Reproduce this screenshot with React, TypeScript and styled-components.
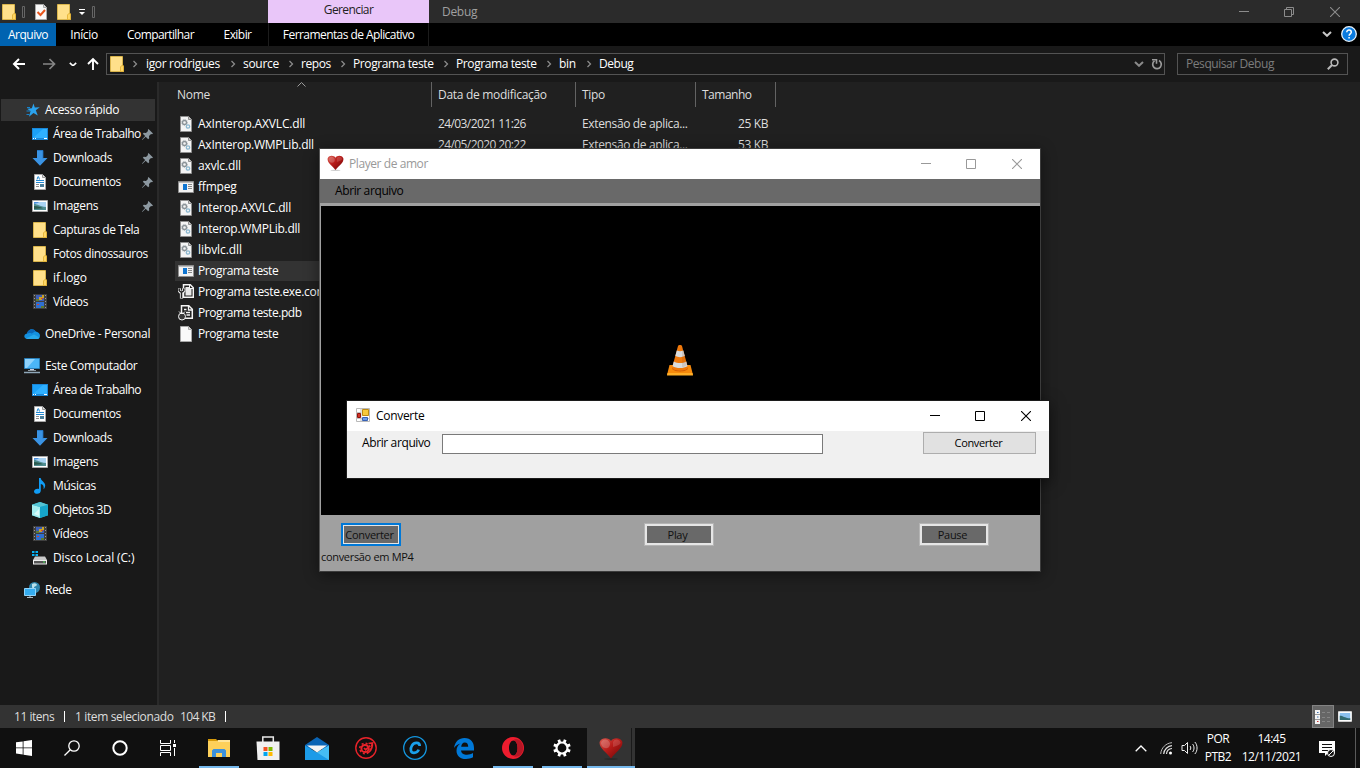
import React from "react";
import styled, { createGlobalStyle, css } from "styled-components";

const Global = createGlobalStyle`
  * { box-sizing: border-box; }
  body { margin: 0; background: #202020; overflow: hidden; }
  #root { width: 1360px; height: 768px; }
`;

const Screen = styled.div`
  position: relative;
  width: 1360px;
  height: 768px;
  display: flex;
  flex-direction: column;
  overflow: hidden;
  background: #202020;
  color: #fff;
  font: 12px/16px "Open Sans", "Noto Sans", sans-serif;
  letter-spacing: -0.3px;
  white-space: nowrap;
  cursor: default;
`;

const Text = styled.span<{ $ls?: number; $size?: number; $color?: string }>`
  display: block;
  letter-spacing: ${(p) => p.$ls ?? -0.3}px;
  ${(p) => p.$size && css`font-size: ${p.$size}px;`}
  ${(p) => p.$color && css`color: ${p.$color};`}
`;
const Gap = styled.span<{ $w: number }>`
  flex: none;
  width: ${(p) => p.$w}px;
`;

/* ---------- Explorer chrome ---------- */
const TitleBar = styled.header`
  display: flex;
  height: 23px;
  background: #2b2b2b;
`;
const QuickAccess = styled.div`
  width: 268px;
  display: flex;
  align-items: center;
  padding-left: 1px;
`;
const ContextTab = styled.div`
  width: 161px;
  height: 23px;
  padding-top: 2px;
  text-align: center;
  background: #e9c6f9;
  color: #222;
`;
const WindowName = styled.div`
  flex: 1;
  padding: 4px 0 0 13px;
  color: #a0a0a0;
`;
const Controls = styled.div<{ $right: number; $color: string }>`
  display: flex;
  align-items: center;
  gap: 35px;
  padding-right: ${(p) => p.$right}px;
  color: ${(p) => p.$color};
  & > :last-child { margin-left: 1px; }
`;
const Ribbon = styled.nav`
  display: flex;
  height: 23px;
  background: #000;
  align-items: center;
`;
const RibbonTab = styled.div<{ $w: number; $active?: boolean; $edge?: boolean }>`
  width: ${(p) => p.$w}px;
  height: 23px;
  padding-top: 4px;
  text-align: center;
  background: ${(p) => (p.$active ? "#0063b1" : "transparent")};
  ${(p) => p.$edge && css`border-left: 1px solid #1c1c1c; border-right: 1px solid #1c1c1c;`}
`;
const RibbonEnd = styled.div`
  margin-left: auto;
  display: flex;
  align-items: center;
  gap: 9px;
  padding: 0 3px 1px 0;
`;
const NavBar = styled.div`
  display: flex;
  height: 36px;
  padding: 7px 12px 7px 0;
  background: #191919;
`;
const NavButtons = styled.div`
  width: 106px;
  display: flex;
  align-items: center;
`;
const AddressBox = styled.div`
  width: 1059px;
  height: 22px;
  border: 1px solid #535353;
  display: flex;
  align-items: center;
`;
const Crumb = styled.div<{ $w: number }>`
  width: ${(p) => p.$w}px;
  height: 20px;
  display: flex;
  align-items: center;
  justify-content: space-between;
  padding: 0 7px 0 0;
`;
const AddressTools = styled.div`
  margin-left: auto;
  display: flex;
  align-items: center;
  gap: 7px;
  padding-right: 1px;
`;
const SearchBox = styled.div`
  margin-left: 12px;
  width: 171px;
  height: 22px;
  border: 1px solid #535353;
  display: flex;
  align-items: center;
  justify-content: space-between;
  padding: 0 8px 0 8px;
  color: #7c7c7c;
`;
const Body = styled.div`
  flex: 1;
  display: flex;
  min-height: 0;
`;
const Sidebar = styled.aside`
  width: 159px;
  padding-top: 16px;
  background: #191919;
  border-right: 2px solid #2a2a2a;
`;
const SideRow = styled.div<{ $level: number; $gap?: boolean; $active?: boolean }>`
  display: flex;
  align-items: center;
  width: 154px;
  height: ${(p) => (p.$active ? 22 : 24)}px;
  margin: ${(p) => (p.$active ? "1px 0 1px 1px" : p.$gap ? "8px 0 0 1px" : "0 0 0 1px")};
  padding-left: ${(p) => (p.$level ? 31 : 23)}px;
  background: ${(p) => (p.$active ? "#333" : "transparent")};
`;
const SideIcon = styled.span`
  display: flex;
  width: 16px;
  margin-right: 5px;
`;
const PinSlot = styled.span`
  display: flex;
  margin: 0 2px 0 auto;
`;
const FileArea = styled.main`
  flex: 1;
  display: flex;
  flex-direction: column;
`;
const ColumnHeads = styled.div`
  display: flex;
  height: 31px;
  color: #dedede;
`;
const ColumnHead = styled.div<{ $w: number; $pad: number }>`
  position: relative;
  width: ${(p) => p.$w}px;
  height: 25px;
  padding: 5px 0 0 ${(p) => p.$pad}px;
  border-right: 1px solid #636363;
`;
const SortMark = styled.span`
  position: absolute;
  left: 138px;
  top: 0;
  display: flex;
`;
const FileRow = styled.div<{ $active?: boolean }>`
  display: flex;
  align-items: center;
  height: ${(p) => (p.$active ? 20 : 21)}px;
  margin: ${(p) => (p.$active ? "1px 0 0 16px" : "0 0 0 16px")};
  width: 600px;
  padding-left: 3px;
  background: ${(p) => (p.$active ? "#333" : "transparent")};
`;
const FileName = styled.div`
  width: 244px;
  padding-left: 4px;
`;
const Cell = styled.div<{ $w: number; $right?: boolean }>`
  width: ${(p) => p.$w}px;
  color: #dedede;
  display: flex;
  justify-content: ${(p) => (p.$right ? "flex-end" : "flex-start")};
`;
const StatusBar = styled.footer`
  display: flex;
  align-items: center;
  height: 23px;
  padding: 0 8px 0 14px;
  background: #333;
  color: #dedede;
`;
const StatusItem = styled.div<{ $w: number }>`
  width: ${(p) => p.$w}px;
`;
const StatusLine = styled.i`
  width: 1px;
  height: 11px;
  margin-right: 10px;
  background: #fff;
`;
const ViewModes = styled.div`
  margin-left: auto;
  display: flex;
  align-items: center;
  gap: 4px;
`;
const ViewMode = styled.div`
  width: 22px;
  height: 23px;
  display: flex;
  align-items: center;
  justify-content: center;
  background: #666;
  border: 1px solid #838383;
`;

/* ---------- Taskbar ---------- */
const Taskbar = styled.footer`
  display: flex;
  height: 40px;
  background: #101010;
`;
const TaskGroup = styled.div<{ $gap?: number }>`
  display: flex;
  margin-left: ${(p) => p.$gap ?? 0}px;
`;
const TaskButton = styled.div<{ $w: number; $open?: boolean; $current?: boolean }>`
  width: ${(p) => p.$w}px;
  height: 40px;
  display: flex;
  flex-direction: column;
  align-items: center;
  justify-content: space-between;
  ${(p) =>
    p.$current &&
    css`
      margin-left: 1px;
      background: linear-gradient(90deg, #333 44px, #1a1a1a 44px, #1a1a1a 45px, #333 45px);
    `}
  &::after {
    content: "";
    width: ${(p) => (p.$current ? 48 : 40)}px;
    height: 2px;
    background: ${(p) => (p.$open ? "#76b9ed" : "transparent")};
  }
`;
const TaskIcon = styled.span`
  flex: 1;
  display: flex;
  align-items: center;
  padding-top: 2px;
`;
const Tray = styled.div`
  margin-left: auto;
  display: flex;
  align-items: center;
  height: 40px;
`;
const TrayIcon = styled.span<{ $w: number }>`
  width: ${(p) => p.$w}px;
  display: flex;
  justify-content: center;
`;
const TrayText = styled.div<{ $w: number }>`
  width: ${(p) => p.$w}px;
  height: 34px;
  display: flex;
  flex-direction: column;
  justify-content: space-between;
  align-items: center;
`;
const ShowDesktop = styled.i`
  width: 5px;
  height: 40px;
  border-left: 1px solid #5a5a5a;
`;

/* ---------- Floating windows ---------- */
const Player = styled.section`
  position: absolute;
  left: 319px;
  top: 148px;
  width: 722px;
  height: 424px;
  border: 1px solid #3c3c3c;
  border-left-color: #555;
  background: #a0a0a0;
  display: flex;
  flex-direction: column;
  color: #111;
  box-shadow: 0 3px 14px rgba(0, 0, 0, 0.45);
`;
const Caption = styled.div<{ $color: string }>`
  display: flex;
  align-items: center;
  height: 30px;
  flex: none;
  background: #fff;
  color: ${(p) => p.$color};
`;
const CaptionIcon = styled.span<{ $left: number; $gap: number }>`
  display: flex;
  margin: 0 ${(p) => p.$gap}px 2px ${(p) => p.$left}px;
`;
const CaptionText = styled.div`
  flex: 1;
`;
const MenuStrip = styled.div`
  height: 24px;
  padding: 4px 0 0 15px;
  background: #696969;
  color: #000;
`;
const Video = styled.div`
  height: 309px;
  margin: 3px 0 0 1px;
  padding: 0 2px 2px 0;
  background: #000;
  display: flex;
  justify-content: center;
  align-items: center;
`;
const PlayerControls = styled.div`
  display: flex;
  height: 33px;
  padding: 8px 0 0 21px;
`;
const PlayerButton = styled.button<{ $w: number; $left?: number; $focus?: boolean }>`
  width: ${(p) => p.$w}px;
  height: 23px;
  margin: 0 0 0 ${(p) => p.$left ?? 0}px;
  padding: 0 3px 0 0;
  display: flex;
  align-items: center;
  justify-content: center;
  font: inherit;
  color: #111;
  background: #696969;
  border: ${(p) => (p.$focus ? "2px solid #0078d7" : "1px solid #b4b4b4")};
  box-shadow: inset 0 0 0 ${(p) => (p.$focus ? 1 : 2)}px #e6e6e6;
`;
const StatusNote = styled.div`
  padding: 1px 0 0 1px;
`;
const Converter = styled.section`
  position: absolute;
  left: 346px;
  top: 400px;
  width: 704px;
  height: 79px;
  border: 1px solid #1c1c1c;
  background: #f0f0f0;
  color: #000;
  box-shadow: 0 4px 14px rgba(0, 0, 0, 0.5);
`;
const Form = styled.div`
  display: flex;
  padding: 1px 13px 0 15px;
`;
const FormLabel = styled.label`
  width: 80px;
  padding-top: 3px;
`;
const FormInput = styled.input`
  width: 381px;
  height: 20px;
  margin-top: 2px;
  padding: 0;
  border: 1px solid #7a7a7a;
  background: #fff;
`;
const FormButton = styled.button`
  margin-left: auto;
  width: 113px;
  height: 22px;
  padding: 0 2px 1px 0;
  border: 1px solid #adadad;
  background: #e1e1e1;
  font: inherit;
  color: #000;
  display: flex;
  align-items: center;
  justify-content: center;
`;

/* ---------- Icons ---------- */
const Drawing = styled.svg`
  display: block;
  flex: none;
`;
const Svg = ({ w = 16, h = w, v, children }: { w?: number; h?: number; v?: string; children: React.ReactNode }) => (
  <Drawing width={w} height={h} viewBox={v ?? `0 0 ${w} ${h}`} fill="none">
    {children}
  </Drawing>
);

const Folder = () => (
  <Svg>
    <path d="M1.500.5h12v9l1 .8v5.200h-13z" fill="#ffe08a" stroke="#eec34a" strokeWidth=".8" />
    <path d="M11.500 15.500V11l1-1.300h2v5.800z" fill="#ffd765" stroke="#e0ad30" strokeWidth=".8" />
  </Svg>
);
const Checked = () => (
  <Svg>
    <path d="M2.500.5h8l3 3v12h-11z" fill="#fafafa" stroke="#aaa" />
    <path d="M10.500.5v3h3" fill="#ddd" stroke="#aaa" />
    <path d="M4.500 8l3 3L12 6" stroke="#e8561d" strokeWidth="2" />
  </Svg>
);
const Star = () => (
  <Svg>
    <path d="M9.500 1.500l1.300 4 5-.2-4 3 2 5.300-4.300-2.600-4.500 3.700 1.500-5.400-3.300-2.600 4.600-.5z" fill="#2ba3ee" />
    <path d="M3 5.500h3M2.500 9h4M2.500 12.500h3" stroke="#1683cc" />
  </Svg>
);
const Desktop = () => (
  <Svg>
    <path d="M0 2h16v12H0z" fill="#1a87d8" />
    <path d="M1 3h14v9H1z" fill="#1ba1f8" />
    <path d="M1 12L11 3h4v9z" fill="#2fb0ff" />
    <path d="M1 12.500h1M3 12.500h1M12 12.500h3" stroke="#fff" />
  </Svg>
);
const Download = () => (
  <Svg>
    <path d="M5 0h6v8h4.500L8 15.800.5 8H5z" fill="#3a93e4" />
    <path d="M5 .5h6v8" stroke="#1e70bd" strokeWidth=".8" />
  </Svg>
);
const Doc = () => (
  <Svg>
    <path d="M2.500.5h8l3 3v12h-11z" fill="#fff" stroke="#a8a8a8" />
    <path d="M10.500.5v3h3" fill="#ddd" stroke="#999" />
    <path d="M6 2.500L5 5.500M6.500 2.500l1 3M4 6.500h8M4 8.500h8" stroke="#2389d2" />
    <path d="M4 10.500h3M4 12.500h3" stroke="#8d8d8d" />
    <path d="M8 10h4v3H8z" fill="#4b7f9b" />
  </Svg>
);
const Picture = () => (
  <Svg>
    <path d="M.5 2.500h15v11H.5z" fill="#fff" stroke="#a9a9a9" />
    <path d="M2 4h12v8H2z" fill="#a9d3f3" />
    <path d="M2 6c4 0 5 2.500 12 3v3H2z" fill="#4f8d91" />
    <path d="M2 8c4 0 6 1 9 2.200l-9 .8z" fill="#2b5a4e" />
    <path d="M2 4h5c-1 1.500-3 1-5 2z" fill="#4b8edb" />
  </Svg>
);
const Film = () => (
  <Svg>
    <path d="M1 0h14v15H1z" fill="#3f3f3f" />
    <path d="M4 1h8v6H4z" fill="#3e5fb8" />
    <path d="M4 8h8v6H4z" fill="#2f6fd0" />
    <path d="M7 3h3v3H7zM10 1h2v3h-2z" fill="#c9a227" />
    <path d="M4 5h3v2H4zM9 12h3v2H9z" fill="#5d7b33" />
    <path d="M9 4h2v1H9zM5 10h2v1H5z" fill="#d3452b" />
    <path d="M2.500 1v14M13.500 1v14" stroke="#999" strokeDasharray="1 2" />
  </Svg>
);
const Cloud = () => (
  <Svg>
    <path d="M3.500 13C-.5 13-.8 8.200 3 7.500 4 3.300 9 1.500 11.800 5.500 15 6 16 8 16 9.800c0 1.800-1.200 3.200-3 3.200z" fill="#1490df" />
    <path d="M3 7.500C4 3.300 9 1.500 11.800 5.500c-2 .2-3 1.500-4 2C6 6.700 4.500 7 3 7.500z" fill="#0a66b7" />
    <path d="M2 12.600l8-4.100 5.500 3c-.5 1-1.500 1.500-2.500 1.500H3.500z" fill="#28a8ea" />
  </Svg>
);
const Computer = () => (
  <Svg>
    <path d="M.5.5h15v10H.5z" fill="#4bb5f7" stroke="#2a7fb8" />
    <path d="M1 1h10L3 10H1z" fill="#8fd2fb" />
    <path d="M6 11h4v1.500H6z" fill="#ccd" />
    <path d="M4 12.500h8" stroke="#8e9aa3" />
    <path d="M0 14.500h16" stroke="#8fa7b8" strokeWidth="1.500" />
  </Svg>
);
const Music = () => (
  <Svg>
    <path d="M7 0h1.700c.3 3 4.500 4.200 4.500 7.300 0 1.700-.7 3-1.600 3.900C12 8 11 6.500 8.800 6v6.500c0 2-1.500 3.300-3.600 3.300C3.500 15.800 2 15 2 13.500c0-2 2.600-3.300 5-2.500z" fill="#109cf5" />
  </Svg>
);
const Cube = () => (
  <Svg>
    <path d="M8 0l8 2.700v10.500L8 16l-8-2.800V2.700z" fill="#2cc0d8" />
    <path d="M0 2.700L8 5v11l-8-2.800z" fill="#a5eef0" />
    <path d="M0 2.700L8 0l8 2.700L8 5z" fill="#55c4d4" />
    <path d="M8 5l8-2.300v10.500L8 16z" fill="#16a5ca" />
    <path d="M2 12l5-5v7z" fill="#d8fbfa" />
  </Svg>
);
const Disk = () => (
  <Svg>
    <path d="M0 1h2.500v2H0zM3.500 1H6v2H3.500zM0 4h2.500v2H0zM3.500 4H6v2H3.500z" fill="#08b3f5" />
    <path d="M3 6.500h10L15 10H1z" fill="#c9c9c9" />
    <path d="M1 10h14v4.500H1z" fill="#efefef" />
    <path d="M2 11h12v2.500H2z" fill="#555" />
    <path d="M11 12h2" stroke="#45e054" />
  </Svg>
);
const Network = () => (
  <Svg>
    <circle cx="10.500" cy="5.500" r="5.500" fill="#2f86ad" />
    <path d="M8 2c3-2 5 0 5 1s-3 1-3 3-2 0-2-1z" fill="#b9e0ea" />
    <path d="M.5 6.500h11v7H.5z" fill="#35acef" stroke="#91d4fa" />
    <path d="M6 14v1M3 15.500h6" stroke="#aebbc4" />
  </Svg>
);
const Pin = () => (
  <Svg w={11}>
    <path d="M6.500 0L11 4.500l-1 .8-1-.2-2 2 .2 2.200-1 1L3.700 7.800.5 10.800 0 11l.2-.7L3.200 7 .8 4.700l1-1L4 4l2-2-.2-1z" fill="#8c98a0" />
  </Svg>
);
const Dll = () => (
  <Svg>
    <path d="M2.500.5h8l3 3v12h-11z" fill="#f4f4f4" stroke="#8f8f8f" />
    <path d="M10.500.5v3h3" fill="#ccc" stroke="#8f8f8f" />
    <circle cx="6.500" cy="6.500" r="2" stroke="#8a9297" strokeWidth="1.300" />
    <circle cx="6.500" cy="6.500" r="3" stroke="#a6adb2" strokeDasharray="1 1" />
    <circle cx="10" cy="10.500" r="1.700" stroke="#8db8d0" strokeWidth="1.300" />
  </Svg>
);
const Exe = () => (
  <Svg>
    <path d="M.5 2.500h15v11H.5z" fill="#f2f2f2" stroke="#8f8f8f" />
    <path d="M1 3.500h14" stroke="#bbb" />
    <path d="M5 5h4v6H5z" fill="#0f75d1" />
    <path d="M10 5.500h4M10 7.500h4M10 9.500h4" stroke="#888" />
  </Svg>
);
const Config = () => (
  <Svg>
    <path d="M5.500.8h6.800l3 3v9.500H5.500z" fill="#222" stroke="#f4f4f4" strokeWidth="1.500" />
    <path d="M7.500 3H11l2.500 2.500v6h-6z" fill="#e8e8e8" />
    <path d="M11.500 1v3.500H15" stroke="#f4f4f4" />
    <path d="M1.200 4.200v2.600L3.500 9v5.500M5.800 4.200v2.600L3.500 9" stroke="#f4f4f4" strokeWidth="3.200" />
    <path d="M1.200 4.500v2.200L3.500 8.500v5.500M5.800 4.500v2.200L3.500 8.500" stroke="#222" strokeWidth="1.500" />
  </Svg>
);
const Pdb = () => (
  <Svg>
    <path d="M3.500.8h7.300l3.500 3.500v9H3.500z" fill="#222" stroke="#f4f4f4" strokeWidth="1.500" />
    <path d="M10.500 1v4H14M6 4.500h2.500M8 7.500h4M8.500 10h3.500" stroke="#f4f4f4" strokeWidth="1.300" />
    <circle cx="4" cy="11.500" r="3.500" fill="#3a3a3a" stroke="#f4f4f4" />
    <path d="M1 6.500l2 2h2l2-2" stroke="#f4f4f4" />
  </Svg>
);
const Blank = () => (
  <Svg>
    <path d="M2.500.5h8l3 3v12h-11z" fill="#fafafa" stroke="#a8a8a8" />
    <path d="M10.500.5v3h3" fill="#ddd" stroke="#a8a8a8" />
  </Svg>
);
const Heart = ({ w, h }: { w: number; h: number }) => (
  <Svg w={w} h={h} v="0 0 24 23">
    <defs>
      <linearGradient id="heart" x1="0" y1="0" x2="1" y2="1">
        <stop offset="0" stopColor="#d8584e" />
        <stop offset=".45" stopColor="#b81c19" />
        <stop offset="1" stopColor="#6c0405" />
      </linearGradient>
    </defs>
    <ellipse cx="12" cy="22" rx="7" ry=".7" fill="#000" opacity=".25" />
    <path d="M12 4C10 .5 3 0 .8 4.500-.8 10.500 7 15 12 21.500 17 15 24.800 10.500 23.200 4.500 21 0 14 .5 12 4z" fill="url(#heart)" />
    <path d="M2 6c.5-4 6-5 8.500-1 1 2 .5 4-1 5.500C7 12 2.500 11 2 6z" fill="#fff" opacity=".2" />
    <path d="M14 5c1.500-3.500 6.500-3.300 7.500.5 0 2-3 3-7.500 4.500z" fill="#fff" opacity=".14" />
  </Svg>
);
const Cone = () => (
  <Svg w={28} h={32}>
    <path d="M3.500 21h21L27 31H1z" fill="#f68a0c" />
    <path d="M1.500 29h25l.5 2.500H1z" fill="#ffae27" />
    <path d="M6 24c0 4.500 16 4.500 16 0z" fill="#cb5a05" />
    <path d="M12 2c.5-1.300 3.500-1.300 4 0l6 22c-2 3.600-14 3.600-16 0z" fill="#ef780b" />
    <path d="M10.800 6.500c2 1 4.500 1 6.500 0l1.500 5.500c-3 1.500-6.500 1.500-9.500 0z" fill="#d9dcde" />
    <path d="M7.800 17.500c3.500 2 9 2 12.500 0l1.200 4.800c-4 2.400-11 2.400-15 0z" fill="#d9dcde" />
    <path d="M16 1l5 20c-1.500 1.500-3 2-5 2z" fill="#843400" opacity=".13" />
  </Svg>
);
const FormIcon = () => (
  <Svg w={14}>
    <path d="M.5.500h13v13H.500z" fill="#fff" stroke="#b9b9b9" />
    <path d="M5 0v14M0 4.500h5M0 10.500h14" stroke="#c4c4c4" />
    <path d="M6.500 1.500h6v6h-6z" fill="#f7c93b" stroke="#bc8a13" />
    <path d="M1.500 5.500h3v4h-3z" fill="#d13427" stroke="#8f120c" />
    <path d="M6.500 9.500h5v3h-5z" fill="#6b9be8" stroke="#3862b5" />
  </Svg>
);
const Minimize = () => <Svg w={10}><path d="M0 4.500h10" stroke="currentColor" /></Svg>;
const Maximize = () => <Svg w={10}><path d="M.5.500h9v9h-9z" stroke="currentColor" /></Svg>;
const Restore = () => <Svg w={10}><path d="M.5 2.500h7v7h-7zM2.500 2.500v-2h7v7h-2" stroke="currentColor" /></Svg>;
const Close = () => <Svg w={10}><path d="M0 0l10 10M10 0L0 10" stroke="currentColor" strokeWidth="1.100" /></Svg>;
const Chevron = ({ color = "#8a8a8a" }: { color?: string }) => (
  <Svg w={6} h={8}><path d="M1.500 1l3 3-3 3" stroke={color} strokeWidth="1.300" /></Svg>
);
const Down = ({ color = "#c8c8c8", w = 10 }: { color?: string; w?: number }) => (
  <Svg w={w} h={w * 0.6} v="0 0 10 6"><path d="M1 1l4 3.800L9 1" stroke={color} strokeWidth="2" /></Svg>
);
const Grip = () => <Svg w={3} h={12}><path d="M.5.500h2v11h-2z" stroke="#666" /></Svg>;

/* ---------- Data ---------- */
type Side = [string, () => React.JSX.Element, number, number, string?];
const side: Side[] = [
  ["Acesso rápido", Star, 0, -0.32, "active"],
  ["Área de Trabalho", Desktop, 1, -0.52, "pin"],
  ["Downloads", Download, 1, -0.4, "pin"],
  ["Documentos", Doc, 1, -0.35, "pin"],
  ["Imagens", Picture, 1, -0.35, "pin"],
  ["Capturas de Tela", Folder, 1, -0.48],
  ["Fotos dinossauros", Folder, 1, -0.42],
  ["if.logo", Folder, 1, -0.02],
  ["Vídeos", Film, 1, -0.35],
  ["OneDrive - Personal", Cloud, 0, -0.35, "gap"],
  ["Este Computador", Computer, 0, -0.34, "gap"],
  ["Área de Trabalho", Desktop, 1, -0.5],
  ["Documentos", Doc, 1, -0.35],
  ["Downloads", Download, 1, -0.4],
  ["Imagens", Picture, 1, -0.35],
  ["Músicas", Music, 1, -0.3],
  ["Objetos 3D", Cube, 1, -0.4],
  ["Vídeos", Film, 1, -0.35],
  ["Disco Local (C:)", Disk, 1, -0.13],
  ["Rede", Network, 0, -0.45, "gap"],
];
type FileItem = { name: string; icon: () => React.JSX.Element; ls?: number; date?: string; kind?: string; size?: string; active?: boolean };
const files: FileItem[] = [
  { name: "AxInterop.AXVLC.dll", icon: Dll, ls: -0.16, date: "24/03/2021 11:26", kind: "Extensão de aplica...", size: "25 KB" },
  { name: "AxInterop.WMPLib.dll", icon: Dll, ls: -0.23, date: "24/05/2020 20:22", kind: "Extensão de aplica...", size: "53 KB" },
  { name: "axvlc.dll", icon: Dll, ls: -0.15 },
  { name: "ffmpeg", icon: Exe, ls: -0.2 },
  { name: "Interop.AXVLC.dll", icon: Dll, ls: -0.2 },
  { name: "Interop.WMPLib.dll", icon: Dll, ls: -0.25 },
  { name: "libvlc.dll", icon: Dll, ls: -0.08 },
  { name: "Programa teste", icon: Exe, ls: -0.42, active: true },
  { name: "Programa teste.exe.config", icon: Config, ls: -0.32 },
  { name: "Programa teste.pdb", icon: Pdb, ls: -0.42 },
  { name: "Programa teste", icon: Blank, ls: -0.42 },
];
const crumbs: [string, number, number][] = [
  ["igor rodrigues", 97, -0.34],
  ["source", 58, -0.3],
  ["repos", 52, -0.4],
  ["Programa teste", 103, -0.4],
  ["Programa teste", 103, -0.4],
  ["bin", 40, -0.3],
];

export default function App() {
  return (
    <Screen>
      <Global />
      <TitleBar>
        <QuickAccess>
          <Folder />
          <Gap $w={5} />
          <Grip />
          <Gap $w={8} />
          <Checked />
          <Gap $w={7} />
          <Folder />
          <Gap $w={6} />
          <Svg w={8} h={8}><path d="M1 1.500h6" stroke="#fff" /><path d="M1 4h6L4 7z" fill="#fff" /></Svg>
          <Gap $w={6} />
          <Grip />
        </QuickAccess>
        <ContextTab><Text $ls={-0.6}>Gerenciar</Text></ContextTab>
        <WindowName><Text>Debug</Text></WindowName>
        <Controls $right={20} $color="#8c8c8c">
          <Minimize />
          <Restore />
          <Close />
        </Controls>
      </TitleBar>
      <Ribbon>
        <RibbonTab $w={56} $active><Text $ls={-0.5}>Arquivo</Text></RibbonTab>
        <RibbonTab $w={56}><Text $ls={-0.35}>Início</Text></RibbonTab>
        <RibbonTab $w={97}><Text $ls={-0.6}>Compartilhar</Text></RibbonTab>
        <RibbonTab $w={57}><Text $ls={-0.55}>Exibir</Text></RibbonTab>
        <Gap $w={2} />
        <RibbonTab $w={161} $edge><Text $ls={-0.57}>Ferramentas de Aplicativo</Text></RibbonTab>
        <RibbonEnd>
          <Down />
          <Svg w={16}>
            <circle cx="8" cy="8" r="7.300" fill="#0a7be0" stroke="#e8f3fc" strokeWidth="1.300" />
            <path d="M5.800 6.200c0-3 4.500-2.800 4.500 0 0 1.600-2.200 1.700-2.200 3.500M8.100 11v1.600" stroke="#fff" strokeWidth="1.500" />
          </Svg>
        </RibbonEnd>
      </Ribbon>
      <NavBar>
        <NavButtons>
          <Gap $w={12} />
          <Svg w={14}><path d="M13 7H2M7 2L2 7l5 5" stroke="#fff" strokeWidth="2" /></Svg>
          <Gap $w={16} />
          <Svg w={14}><path d="M1 7h11.500M7.500 2l5 5-5 5" stroke="#868686" strokeWidth="1.700" /></Svg>
          <Gap $w={13} />
          <Down color="#fff" w={8} />
          <Gap $w={10} />
          <Svg w={12} h={14}><path d="M6 13V2M1 7l5-5 5 5" stroke="#fff" strokeWidth="1.900" /></Svg>
        </NavButtons>
        <AddressBox>
          <Gap $w={2} />
          <Folder />
          <Gap $w={7} />
          <Chevron />
          <Gap $w={8} />
          {crumbs.map(([name, w, ls], i) => (
            <Crumb key={i} $w={w}>
              <Text $ls={ls}>{name}</Text>
              <Chevron />
            </Crumb>
          ))}
          <Text $ls={-0.45}>Debug</Text>
          <AddressTools>
            <Down color="#8a8a8a" />
            <Svg w={12}>
              <path d="M8 2.600a4.300 4.300 0 1 1-4.500.3" stroke="#9a9a9a" strokeWidth="1.700" />
              <path d="M1 1.800h4.500v4" stroke="#9a9a9a" strokeWidth="1.600" />
            </Svg>
          </AddressTools>
        </AddressBox>
        <SearchBox>
          <Text $ls={-0.43}>Pesquisar Debug</Text>
          <Svg w={12}><circle cx="7.500" cy="4.500" r="3.400" stroke="#b8b8b8" strokeWidth="1.600" /><path d="M5 7L.8 11.200" stroke="#b8b8b8" strokeWidth="2" /></Svg>
        </SearchBox>
      </NavBar>
      <Body>
        <Sidebar>
          {side.map(([name, Icon, level, ls, flag], i) => (
            <SideRow key={i} $level={level} $active={flag === "active"} $gap={flag === "gap"}>
              <SideIcon><Icon /></SideIcon>
              <Text $ls={ls}>{name}</Text>
              {flag === "pin" && <PinSlot><Pin /></PinSlot>}
            </SideRow>
          ))}
        </Sidebar>
        <FileArea>
          <ColumnHeads>
            <ColumnHead $w={273} $pad={18}>
              <Text>Nome</Text>
              <SortMark><Svg w={9} h={5}><path d="M.5 4.500l4-4 4 4" stroke="#9a9a9a" /></Svg></SortMark>
            </ColumnHead>
            <ColumnHead $w={144} $pad={6}><Text>Data de modificação</Text></ColumnHead>
            <ColumnHead $w={120} $pad={6}><Text>Tipo</Text></ColumnHead>
            <ColumnHead $w={80} $pad={6}><Text $ls={-0.5}>Tamanho</Text></ColumnHead>
          </ColumnHeads>
          {files.map((f, i) => (
            <FileRow key={i} $active={f.active}>
              <f.icon />
              <FileName><Text $ls={f.ls}>{f.name}</Text></FileName>
              <Cell $w={144}><Text $ls={-0.6}>{f.date}</Text></Cell>
              <Cell $w={120}><Text $ls={-0.36}>{f.kind}</Text></Cell>
              <Cell $w={66} $right><Text $ls={-0.4}>{f.size}</Text></Cell>
            </FileRow>
          ))}
        </FileArea>
      </Body>
      <StatusBar>
        <StatusItem $w={50}><Text $ls={-0.48}>11 itens</Text></StatusItem>
        <StatusLine />
        <StatusItem $w={105}><Text $ls={-0.36}>1 item selecionado</Text></StatusItem>
        <StatusItem $w={45}><Text $ls={-0.6}>104 KB</Text></StatusItem>
        <StatusLine />
        <ViewModes>
          <ViewMode>
            <Svg w={16} h={14}>
              <path d="M0 0h5v14H0z" fill="#f4f4f4" />
              <path d="M0 4.500h5M0 9.500h5" stroke="#999" />
              <path d="M2 2.500h1.500M2 7h1.500" stroke="#3b72b5" />
              <path d="M2 11.500h1.500" stroke="#c33" />
              <path d="M7 2.500h3M12 2.500h3M7 7.500h3M12 7.500h3M7 11.500h3M12 11.500h3" stroke="#858585" />
            </Svg>
          </ViewMode>
          <Svg w={14} h={11} v="0 2 16 12">
            <path d="M.5 2.500h15v11H.5z" fill="#fff" stroke="#eee" />
            <path d="M2 4h12v8H2z" fill="#8ac0ee" />
            <path d="M2 7c4 0 5 2.500 12 3v2H2z" fill="#326b70" />
          </Svg>
        </ViewModes>
      </StatusBar>
      <Taskbar>
        <TaskGroup>
          <TaskButton $w={48}><TaskIcon><Svg w={16}><path d="M0 2.300l6.700-.9v6.100H0zM7.500 1.300L16 0v7.500H7.500zM0 8.300h6.700v6.200L0 13.600zM7.500 8.300H16V16l-8.500-1.200z" fill="#fff" /></Svg></TaskIcon></TaskButton>
          <TaskButton $w={48}><TaskIcon><Svg w={16}><circle cx="10" cy="6" r="5.200" stroke="#fff" strokeWidth="1.300" /><path d="M6.300 9.700L.5 15.500" stroke="#fff" strokeWidth="1.300" /></Svg></TaskIcon></TaskButton>
          <TaskButton $w={48}><TaskIcon><Svg w={16}><circle cx="8" cy="8" r="6.700" stroke="#fff" strokeWidth="2" /></Svg></TaskIcon></TaskButton>
          <TaskButton $w={48}><TaskIcon><Svg w={16}><path d="M.5 0v3.500h10V0M.5 16v-3.500h10V16M.5 5.500h10v5H.500zM14.500 0v3M14.500 8v8" stroke="#fff" /><path d="M13 4h3v3h-3z" fill="#fff" /></Svg></TaskIcon></TaskButton>
        </TaskGroup>
        <TaskGroup $gap={2}>
          <TaskButton $w={49} $open>
            <TaskIcon>
              <Svg w={22} h={18}>
                <path d="M0 0h8l2 2H0z" fill="#d69a0a" />
                <path d="M0 2h9l1-1h12v17H0z" fill="#fdd05a" />
                <path d="M10 1h12v2H10z" fill="#ffe59a" />
                <path d="M4 18v-6.500L5.500 10h11l1.500 1.500V18h-4v-4H8v4z" fill="#3c91dc" />
              </Svg>
            </TaskIcon>
          </TaskButton>
          <TaskButton $w={49}>
            <TaskIcon>
              <Svg w={24} h={24}>
                <path d="M6.800 6V1h10.500v5" stroke="#e8e8e8" strokeWidth="1.500" />
                <path d="M.5 5.500h23V24H1.500z" fill="#f0f0f0" />
                <path d="M7.500 11h4v4h-4z" fill="#f25022" /><path d="M12.500 11h4v4h-4z" fill="#7fba00" />
                <path d="M7.500 16h4v4h-4z" fill="#00a4ef" /><path d="M12.500 16h4v4h-4z" fill="#ffb900" />
              </Svg>
            </TaskIcon>
          </TaskButton>
          <TaskButton $w={49}>
            <TaskIcon>
              <Svg w={24} h={23}>
                <path d="M0 8L12 0l12 8v4H0z" fill="#0a64b4" />
                <path d="M0 8.500l12 7 12-7V23H0z" fill="#1c9be8" />
                <path d="M24 8.500V23L12 15.500z" fill="#45bdf5" />
                <path d="M2 8.500h20L12 15.500z" fill="#f5f5f5" />
              </Svg>
            </TaskIcon>
          </TaskButton>
          <TaskButton $w={49}>
            <TaskIcon>
              <Svg w={22}>
                <circle cx="11" cy="11" r="10.200" stroke="#e8232a" strokeWidth="1.400" />
                <circle cx="10" cy="11.500" r="3.600" stroke="#e8232a" strokeWidth="2" />
                <circle cx="10" cy="11.500" r="5.200" stroke="#e8232a" strokeWidth="1.600" strokeDasharray="2 2.080" />
                <path d="M9 11l1.700 1.700L13 10.500M12 16c3-1 5-4 5.500-8.500M13.500 6.500l4-.5-1 3.500" stroke="#e8232a" strokeWidth="1.700" />
              </Svg>
            </TaskIcon>
          </TaskButton>
          <TaskButton $w={49}>
            <TaskIcon>
              <Svg w={24}>
                <circle cx="12" cy="12" r="11.300" stroke="#1497e0" strokeWidth="1.300" />
                <path d="M16.700 10c0-4-5.500-4-7.700-.6-2.400 3.800-1.200 7.400 2 7.400 2.400 0 4-1.300 4.700-3.200" stroke="#1aa0ea" strokeWidth="2.700" />
              </Svg>
            </TaskIcon>
          </TaskButton>
          <TaskButton $w={49}>
            <TaskIcon>
              <Svg w={20} h={21}>
                <path d="M0 10C1 3.500 5 0 10.500 0 17 0 20 4.500 20 10v2.500H7c.3 3 3 4.300 6 4.300 2.300 0 4.200-.6 6-1.700v4.200c-2 1.200-4.500 1.700-7 1.700-6 0-9.500-3.500-9.500-8.300 0-3 1.500-5.800 4-7.200-3 .8-5 2.300-6.500 4.500z" fill="#0078d7" />
                <path d="M7.200 8.700h7C14.200 6 13 4.500 10.800 4.500S7.500 6.200 7.200 8.700z" fill="#101010" />
              </Svg>
            </TaskIcon>
          </TaskButton>
          <TaskButton $w={49} $open>
            <TaskIcon>
              <Svg w={22}>
                <path fillRule="evenodd" d="M11 0a11 11 0 1 0 0 22 11 11 0 0 0 0-22zm.5 3.500c2.500 0 4 3.300 4 7.500s-1.500 7.500-4 7.500-4.500-3.300-4.500-7.500 2-7.500 4.500-7.500z" fill="#ee1c2e" />
                <path d="M11.500 3.500c1-2 5-1.300 7 .4a10.500 10.500 0 0 1 0 14.200c-2 1.700-6 2.400-7 .4 2.500 0 4-3.300 4-7.500s-1.500-7.500-4-7.500z" fill="#b51725" />
              </Svg>
            </TaskIcon>
          </TaskButton>
          <TaskButton $w={49} $open>
            <TaskIcon>
              <Svg w={18}>
                <circle cx="9" cy="9" r="5.500" stroke="#fff" strokeWidth="2.200" />
                <path d="M5.800.8l1 3M12.200.8l-1 3M5.800 17.200l1-3M12.200 17.200l-1-3M.8 5.800l3 1M.8 12.200l3-1M17.200 5.800l-3 1M17.200 12.200l-3-1" stroke="#fff" strokeWidth="2.800" />
              </Svg>
            </TaskIcon>
          </TaskButton>
          <TaskButton $w={48} $open $current><TaskIcon><Heart w={24} h={23} /></TaskIcon></TaskButton>
        </TaskGroup>
        <Tray>
          <TrayIcon $w={24}><Svg w={12} h={7}><path d="M.7 6.300L6 1l5.300 5.300" stroke="#fff" strokeWidth="1.300" /></Svg></TrayIcon>
          <TrayIcon $w={26}>
            <Svg w={12} h={13}>
              <path d="M.7 12C1 6 6 1 12 .7" stroke="#bbb" />
              <path d="M3.700 12c.3-4.500 4-8 8.300-8.300M6.500 12c.2-3 2.500-5.200 5.500-5.500" stroke="#e0e0e0" strokeWidth="1.200" />
              <circle cx="10.500" cy="11" r="1.500" fill="#fff" />
            </Svg>
          </TrayIcon>
          <TrayIcon $w={20}>
            <Svg w={17} h={14}>
              <path d="M1 4.500h2.500l3-3v11l-3-3H1zM9 5c1 1 1 3 0 4M11.500 3c2 2 2 6 0 8M13.800 1c3 3 3 9 0 12" stroke="#eee" />
            </Svg>
          </TrayIcon>
          <TrayText $w={38}><Text $ls={-0.45}>POR</Text><Text $ls={-0.5}>PTB2</Text></TrayText>
          <TrayText $w={69}><Text $ls={-0.5}>14:45</Text><Text $ls={-0.4}>12/11/2021</Text></TrayText>
          <TrayIcon $w={42}>
            <Svg w={16} h={17}>
              <path d="M0 1h16v12H9l-3 3v-3H0z" fill="#fff" />
              <path d="M3 4.500h10M3 7.500h10M3 10.500h6" stroke="#111" />
              <circle cx="12" cy="13" r="3.500" fill="#111" stroke="#fff" /><path d="M9.800 15.200l4.500-4.500" stroke="#fff" />
            </Svg>
          </TrayIcon>
          <Gap $w={7} />
          <ShowDesktop />
        </Tray>
      </Taskbar>

      <Player>
        <Caption $color="#999">
          <CaptionIcon $left={7} $gap={5}><Heart w={17} h={16} /></CaptionIcon>
          <CaptionText><Text $ls={-0.42}>Player de amor</Text></CaptionText>
          <Controls $right={18} $color="#999"><Minimize /><Maximize /><Close /></Controls>
        </Caption>
        <MenuStrip><Text $ls={-0.38}>Abrir arquivo</Text></MenuStrip>
        <Video><Cone /></Video>
        <PlayerControls>
          <PlayerButton $w={60} $focus><Text $size={11}>Converter</Text></PlayerButton>
          <PlayerButton $w={70} $left={243}><Text $size={11}>Play</Text></PlayerButton>
          <PlayerButton $w={70} $left={205}><Text $size={11}>Pause</Text></PlayerButton>
        </PlayerControls>
        <StatusNote><Text $size={11} $ls={-0.32}>conversão em MP4</Text></StatusNote>
      </Player>

      <Converter>
        <Caption $color="#000">
          <CaptionIcon $left={9} $gap={6}><FormIcon /></CaptionIcon>
          <CaptionText><Text>Converte</Text></CaptionText>
          <Controls $right={18} $color="#000"><Minimize /><Maximize /><Close /></Controls>
        </Caption>
        <Form>
          <FormLabel><Text $ls={-0.38}>Abrir arquivo</Text></FormLabel>
          <FormInput />
          <FormButton><Text $size={11} $ls={-0.35}>Converter</Text></FormButton>
        </Form>
      </Converter>
    </Screen>
  );
}
